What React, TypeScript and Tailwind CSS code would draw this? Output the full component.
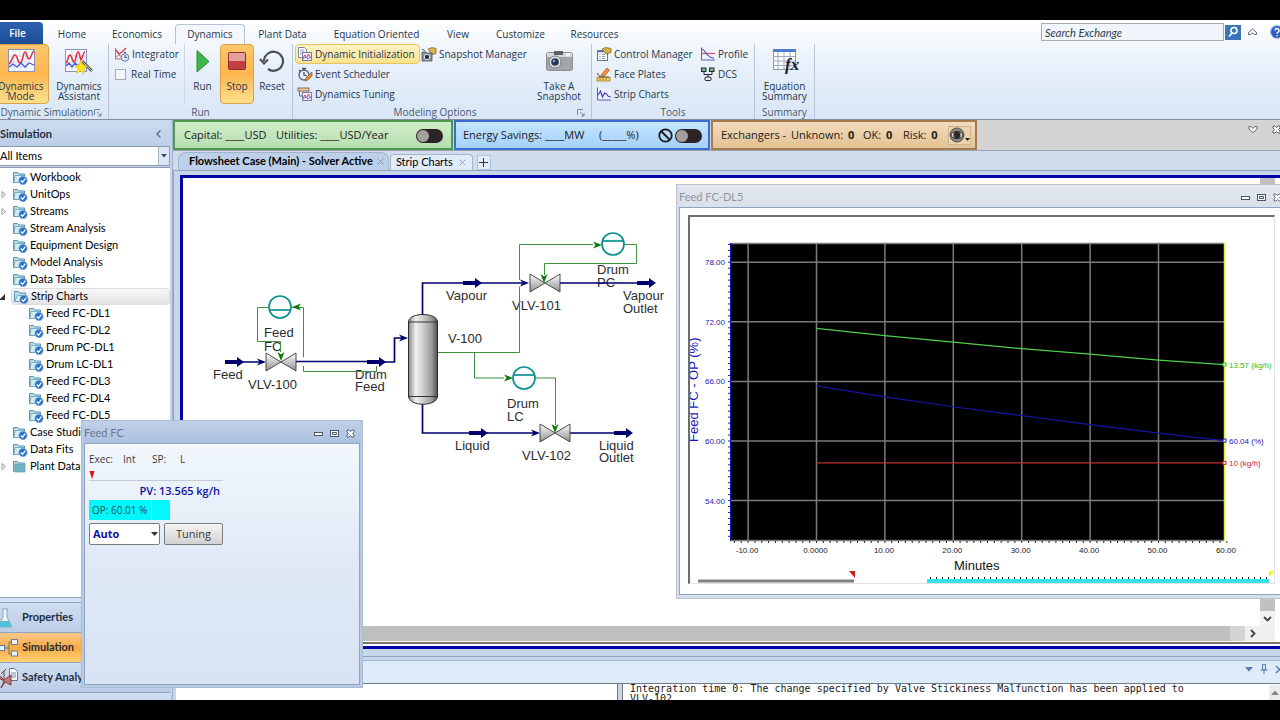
import React from "react";
import clsx from "clsx";

interface TreeItem {
    name: string
    expander?: "closed" | "open"
    child?: boolean
    selected?: boolean
    plain?: boolean
}

const ribbonTabs = [
    { name: "Home", width: "w-[54px]" },
    { name: "Economics", width: "w-[76px]" },
    { name: "Dynamics", width: "w-[70px]" },
    { name: "Plant Data", width: "w-[75px]" },
    { name: "Equation Oriented", width: "w-[113px]" },
    { name: "View", width: "w-[50px]" },
    { name: "Customize", width: "w-[75px]" },
    { name: "Resources", width: "w-[73px]" },
];

const treeItems: TreeItem[] = [
    { name: "Workbook" },
    { name: "UnitOps", expander: "closed" },
    { name: "Streams", expander: "closed" },
    { name: "Stream Analysis" },
    { name: "Equipment Design" },
    { name: "Model Analysis" },
    { name: "Data Tables" },
    { name: "Strip Charts", expander: "open", selected: true },
    { name: "Feed FC-DL1", child: true },
    { name: "Feed FC-DL2", child: true },
    { name: "Drum PC-DL1", child: true },
    { name: "Drum LC-DL1", child: true },
    { name: "Feed FC-DL3", child: true },
    { name: "Feed FC-DL4", child: true },
    { name: "Feed FC-DL5", child: true },
    { name: "Case Studies" },
    { name: "Data Fits" },
    { name: "Plant Data", expander: "closed", plain: true },
];

/* ---------- icons ---------- */

const WaveIcon = ({ wand }: { wand?: boolean }) => (
    <svg width="30" height="26" viewBox="0 0 30 26" fill="none">
        <rect x={wand ? 1.5 : 2.5} y="1.5" width={wand ? 21 : 26} height="22" fill="#f6f8ff" stroke="#8b93b8" />
        <path d="M8 2v21M14 2v21M20 2v21M3 8h19M3 14h19M3 19h19" stroke="#d5dcf0" />
        <path d={wand ? "M2 15c2-1 2-8 4-8s2 7 4 7 2-10 4-10 2 8 3 8 2-8 4-8" : "M3 16c3-1 3-9 6-9s2 8 5 8 3-11 5-11 2 7 4 7 3-8 5-8"} stroke="#e0343f" strokeWidth="1.6" />
        <path d={wand ? "M2 18l3-3 3 4 3-4 3 3 4-3" : "M3 19l4-3 4 3 4-4 4 4 4-4 5 2"} stroke="#4a50d8" strokeWidth="1.3" />
        {wand && (
            <>
                <path d="M18 13l10 10" stroke="#555" strokeWidth="2.6" />
                <path d="M18 13l10 10" stroke="#ddd" strokeWidth="0.8" />
                <path d="M17 13l-2 4-4 1 3 3-2 4 5-2 3 3v-5l3-3-4-1z" fill="#ffe51f" stroke="#e0b400" strokeWidth="0.6" />
            </>
        )}
    </svg>
);

const FolderIcon = ({ plain, open }: { plain?: boolean, open?: boolean }) => (
    <svg width="16" height="14" viewBox="0 0 16 14" className="shrink-0">
        <path d="M1.5 11.5v-10h4l1.5 1.5h5.5v8.5z" fill="#b8dce8" stroke="#5a93ad" />
        <path d={open ? "M1.5 11.5l3-6h9l-2 6z" : plain ? "M3 4h10v8H3z" : "M3 4.500h9v7H2z"} fill={plain ? "#6fb0c4" : "#d2ecf3"} stroke="#6aa3ba" strokeWidth="0.8" />
        {!plain && (
            <>
                <circle cx="11" cy="9.500" r="4.2" fill="#2f73c4" stroke="#8eb7e6" strokeWidth="0.6" />
                <path d="M8.800 9.500l1.700 1.800 2.800-3.600" stroke="#fff" strokeWidth="1.3" fill="none" />
            </>
        )}
    </svg>
);

const IntegratorIcon = () => (
    <svg width="16" height="15" viewBox="0 0 16 15" fill="none">
        <rect x="1.500" y="1.500" width="11" height="10" fill="#f3eef5" />
        <path d="M1.500 1v11H13" stroke="#9a7f90" />
        <path d="M2 3l3 4 3-2 4-4" stroke="#cf3e48" strokeWidth="1.300" />
        <path d="M2 10l3-2 3 2" stroke="#c76f78" />
        <circle cx="11" cy="10.500" r="3.800" fill="#dce8f5" stroke="#6d7c94" />
        <path d="M11 8v2.500h2M10 5.500h2" stroke="#2c5aa0" />
    </svg>
);

const PagesIcon = () => (
    <svg width="16" height="14" viewBox="0 0 16 14" fill="none">
        <path d="M1.500 10.500V.5h6l2 2v8z" fill="#fff" stroke="#7c88a0" />
        <path d="M3 3h4M3 5h4M3 7h2" stroke="#9aa6ba" />
        <rect x="5.500" y="5.500" width="9" height="8" fill="#f5efff" stroke="#7f7aa6" />
        <path d="M6 11l2-3 1.500 3 2-4 2 4" stroke="#d8405a" />
        <path d="M6 12l3-2 2 2 3-2" stroke="#4a50d8" strokeWidth="0.8" />
    </svg>
);

const ScheduleIcon = () => (
    <svg width="16" height="15" viewBox="0 0 16 15" fill="none">
        <circle cx="7" cy="8" r="5" fill="#e8f0fa" stroke="#586b88" strokeWidth="1.400" />
        <path d="M5 1.500h4M7 2v2M7 5v3l3 1M2 3l1.500 1.500" stroke="#405472" strokeWidth="1.300" />
        <path d="M15 5l-6 6-1 3 3-1 4-4z" fill="#e58a2c" stroke="#9b5a1f" strokeWidth="0.7" />
    </svg>
);

const TuningIcon = () => (
    <svg width="16" height="14" viewBox="0 0 16 14" fill="none">
        <rect x="1" y="1" width="11" height="3" fill="#f6c887" stroke="#7e6f66" />
        <path d="M2.500 4v5h4" stroke="#5f6f8c" />
        <rect x="5.500" y="5.500" width="9" height="8" fill="#f5efff" stroke="#7f7aa6" />
        <path d="M6 11l2-3 1.500 3 2-4 2 4" stroke="#d8405a" />
        <path d="M6 12l3-2 2 2 3-2" stroke="#4a50d8" strokeWidth="0.8" />
    </svg>
);

const SnapshotManagerIcon = () => (
    <svg width="16" height="15" viewBox="0 0 16 15" fill="none">
        <path d="M7 2l4-1.500 4 1v5l-4 1z" fill="#d9b24c" stroke="#8a6a1e" strokeWidth="0.8" />
        <path d="M1 5h4l1 1h5v8H1z" fill="#8d9299" stroke="#4e545c" strokeWidth="0.8" />
        <path d="M1 2l3 2" stroke="#4e545c" />
        <circle cx="6" cy="10" r="2.700" fill="#22303f" stroke="#dfe6ee" />
    </svg>
);

const ControlManagerIcon = () => (
    <svg width="16" height="15" viewBox="0 0 16 15" fill="none">
        <rect x="1.500" y="3.500" width="10" height="10" fill="#fbfcfe" stroke="#6a7384" />
        <path d="M2 4.500h9" stroke="#5877b4" strokeWidth="1.600" />
        <path d="M3.500 7.500h1M3.500 9.500h1M3.500 11.500h1M6 7.500h3M6 9.500h3M6 11.500h3" stroke="#8a93a3" />
        <path d="M6 2l4-1.500 5 1v4l-5 1.500z" fill="#d9b24c" stroke="#8a6a1e" strokeWidth="0.8" />
    </svg>
);

const FacePlatesIcon = () => (
    <svg width="16" height="15" viewBox="0 0 16 15" fill="none">
        <path d="M5 8l6-7 2.500 2L8 9.500 5 10z" fill="#f1902f" stroke="#a35217" strokeWidth="0.7" />
        <path d="M1 6l3 4h9" stroke="#3a3f48" />
        <rect x="1" y="10.500" width="13" height="3.500" fill="#f5cc6c" stroke="#a67a23" strokeWidth="0.8" />
        <path d="M4 11v2M7 11v2M10 11v2" stroke="#8a6a1e" strokeWidth="0.8" />
    </svg>
);

const StripIcon = () => (
    <svg width="16" height="14" viewBox="0 0 16 14" fill="none">
        <rect x="1" y="1" width="14" height="12" fill="#f0f1ff" />
        <path d="M1.500.5v12.500H15" stroke="#5c5fa8" />
        <path d="M2 8l2.500-4 2 6 2-4 2 1 1.500 2 2.500 1" stroke="#3a36c8" strokeWidth="1.100" />
    </svg>
);

const ProfileIcon = () => (
    <svg width="16" height="14" viewBox="0 0 16 14" fill="none">
        <rect x="1" y="0" width="14" height="12" fill="#f0f1ff" />
        <path d="M1.500.5v12.500H15" stroke="#5c5fa8" />
        <path d="M2 6.500h13" stroke="#e2475a" strokeWidth="1.200" />
        <path d="M2 2c4 1 4 9 12 9" stroke="#3a4fc8" strokeWidth="1.200" />
    </svg>
);

const DcsIcon = () => (
    <svg width="16" height="15" viewBox="0 0 16 15" fill="none">
        <rect x="1.500" y="1" width="4.500" height="3.500" fill="#7fb98a" stroke="#23272e" />
        <rect x="9.500" y="1" width="4.500" height="3.500" fill="#7fb98a" stroke="#23272e" />
        <path d="M4 5v2.500h8V5M8 7.500V10" stroke="#23272e" />
        <rect x="5" y="10" width="6" height="3.500" rx="1" fill="#e3e6ea" stroke="#23272e" />
    </svg>
);

const RunIcon = () => (
    <svg width="26" height="26" viewBox="0 0 26 26">
        <path d="M7 2.500l12 11-12 10.500z" fill="#3fb64a" stroke="#2b8f38" />
    </svg>
);

const StopIcon = () => (
    <svg width="26" height="26" viewBox="0 0 26 26">
        <rect x="4.500" y="4.500" width="17" height="17" rx="1" fill="#c23f45" stroke="#8f2a2f" />
        <path d="M5 5h16v8H5z" fill="#e5a09c" />
    </svg>
);

const ResetIcon = () => (
    <svg width="26" height="26" viewBox="0 0 26 26" fill="none">
        <path d="M5 13a9.500 9.500 0 1 1 4 8" stroke="#4b4e54" strokeWidth="2.200" />
        <path d="M1 11l4 4.500 4-4" stroke="#4b4e54" strokeWidth="2" />
    </svg>
);

const CameraIcon = () => (
    <svg width="30" height="26" viewBox="0 0 30 26">
        <rect x="2.500" y="4.500" width="26" height="18" rx="2" fill="#a3a5a8" stroke="#8b8d91" />
        <path d="M3 5h25v4H3z" fill="#d6d8da" />
        <rect x="10" y="3" width="9" height="4" fill="#5d6167" />
        <rect x="22" y="5" width="4" height="3" fill="#f4f5f6" />
        <circle cx="11" cy="14" r="6" fill="#dfe2e5" stroke="#7b7f85" />
        <circle cx="11" cy="14" r="3.800" fill="#24374e" />
        <circle cx="10" cy="13" r="1.300" fill="#7fa8d8" />
    </svg>
);

const EquationIcon = () => (
    <svg width="30" height="28" viewBox="0 0 30 28">
        <rect x="3.500" y="3.500" width="22" height="19" fill="#fff" stroke="#8494b2" />
        <path d="M3 2h23v3H3z" fill="#4d7dcb" />
        <path d="M8 5v17M14 5v17M20 5v17M3 9.500h22M3 14h22M3 18.500h22" stroke="#9aa9c6" />
        <text x="15" y="23" fontSize="17" fontStyle="italic" fontWeight="bold" className="font-[Liberation_Serif,serif]" fill="#1c1c1c">fx</text>
    </svg>
);

const FlaskIcon = () => (
    <svg width="18" height="22" viewBox="0 0 18 22">
        <path d="M6 2h6M7 2v8L2 20h14l-5-10V2" fill="#eef6fb" stroke="#8fa3b8" />
        <path d="M5 14h8l3 6H2z" fill="#54bfd8" />
    </svg>
);

const FlowIcon = () => (
    <svg width="22" height="20" viewBox="0 0 22 20">
        <path d="M8 10h5M13 4v12M13 4h3M13 16h3" stroke="#6b7688" fill="none" />
        <g fill="#e9f3ff" stroke="#5f7fa8">
            <rect x="2.500" y="7.500" width="6" height="5" />
            <rect x="15.500" y="1.500" width="6" height="5" />
            <rect x="15.500" y="13" width="6" height="5" />
        </g>
    </svg>
);

const SafetyIcon = () => (
    <svg width="22" height="22" viewBox="0 0 22 22">
        <path d="M13.500 1.500h5l3 3v9h-8z" fill="#f6fafe" stroke="#5f7690" />
        <path d="M15 6h5M15 8h5M15 10h5" stroke="#7f93aa" />
        <path d="M4 9l4 4 7-5v10l-6-3-4 6 3-7-5-3zM8 12V4m-3 3l5-5" fill="#c27777" stroke="#7a3d3d" />
    </svg>
);

const LauncherIcon = ({ className }: { className?: string }) => (
    <svg width="8" height="8" viewBox="0 0 8 8" fill="none" stroke="#7d8796" className={className}>
        <path d="M.5 6V.5H6M3 3l4 4M7 4v3H4" />
    </svg>
);

const CloseIcon = () => (
    <svg width="9" height="9" viewBox="0 0 9 9">
        <path d="M1 1h2l1.500 1.700L6 1h2v2L6.500 4.500 8 6v2H6L4.500 6.500 3 8H1V6l1.500-1.500L1 3z" fill="#fff" stroke="#4a5568" strokeWidth="0.900" />
    </svg>
);

const WindowButtons = () => (
    <div className="flex items-center gap-[7px]">
        <button aria-label="Minimize"><svg width="9" height="9" viewBox="0 0 9 9"><rect x="0.500" y="3.500" width="8" height="3" fill="#fff" stroke="#4a5568" /></svg></button>
        <button aria-label="Restore"><svg width="9" height="9" viewBox="0 0 9 9"><rect x="0.500" y="1.500" width="8" height="6" fill="#fff" stroke="#4a5568" /><path d="M2.500 3.500h4v2h-4z" fill="#fff" stroke="#4a5568" /></svg></button>
        <button aria-label="Close"><CloseIcon /></button>
    </div>
);

const Caret = ({ className }: { className?: string }) => (
    <svg width="8" height="5" viewBox="0 0 8 5" className={className}><path d="M0 0h8L4 4.500z" fill="currentColor" /></svg>
);

/* ---------- ribbon ---------- */

interface RibbonGroupProps {
    label: string
    width: string
    launcher?: boolean
    children: React.ReactNode
}

const RibbonGroup: React.FC<RibbonGroupProps> = ({ label, width, launcher, children }) => (
    <section className={clsx("flex shrink-0 flex-col border-r border-[#b9c6d8]", width)}>
        <div className="flex h-[60px]">{children}</div>
        <div className="flex h-[17px] items-center justify-center leading-[17px] whitespace-nowrap text-[#465a77]">
            <span className={clsx(launcher && "flex-1 text-center")}>{label}</span>
            {launcher && <button aria-label={label + " settings"} className="mr-[6px]"><LauncherIcon /></button>}
        </div>
    </section>
);

interface LargeButtonProps {
    icon: React.ReactNode
    lines: string[]
    active?: boolean
    width: string
}

const LargeButton: React.FC<LargeButtonProps> = ({ icon, lines, active, width }) => (
    <button className={clsx("flex h-[60px] shrink-0 flex-col items-center rounded-sm border pt-[3px] leading-[10px]", width,
        active ? "border-[#d9a24a] bg-linear-to-b from-[#fbc66c] via-[#fdb64c] to-[#fde08c]" : "border-transparent")}>
        <span className="flex h-[26px] items-center">{icon}</span>
        <span className="mt-[7px]">{lines.map((line) => <span key={line} className="block whitespace-nowrap">{line}</span>)}</span>
    </button>
);

const SmallButton = ({ icon, label, active }: { icon: React.ReactNode, label: string, active?: boolean }) => (
    <button className={clsx("flex h-5 items-center gap-[2px] whitespace-nowrap border pl-[1px] pr-1",
        active ? "rounded-sm border-[#e5c365] bg-linear-to-b from-[#fff3c4] to-[#fde28c]" : "border-transparent")}>
        {icon}{label}
    </button>
);

const Ribbon = () => (
    <header className="shrink-0 overflow-hidden border-b border-[#858c98] bg-linear-to-b from-white via-[#e6effa] to-[#d9e6f5] text-[10px] text-[#25364f]">
        <div className="flex h-6 items-end">
            <button className="mr-[2px] h-[22px] w-[43px] shrink-0 rounded-tr-sm bg-linear-to-b from-[#2d62b0] to-[#1d4c96] pr-2 font-semibold text-white">File</button>
            <nav className="flex shrink-0">
                {ribbonTabs.map((tab) => (
                    <a key={tab.name} href="#" className={clsx("flex h-5 items-center justify-center whitespace-nowrap", tab.width,
                        tab.name === "Dynamics" && "rounded-t-sm border border-b-0 border-[#b5c3d6] bg-[#f4f8fd]")}>{tab.name}</a>
                ))}
            </nav>
            <div className="-mr-[4px] ml-auto flex shrink-0 items-center self-start pt-[3px]">
                <input aria-label="Search Exchange" placeholder="Search Exchange" className="h-[18px] w-[183px] border border-[#a3adba] bg-[#f1f6fc] px-[3px] font-[Lato,sans-serif] text-[11px] italic placeholder:text-[#2f3d52]" />
                <button aria-label="Search" className="ml-[1px] flex h-[15px] w-[16px] items-center justify-center bg-[#3b74b8]">
                    <svg width="12" height="12" viewBox="0 0 12 12" fill="none" stroke="#fff" strokeWidth="1.600"><circle cx="7" cy="4.500" r="3" /><path d="M5 7L2 10.500" /></svg>
                </button>
                <button aria-label="Collapse ribbon" className="ml-[7px]">
                    <svg width="9" height="8" viewBox="0 0 9 8"><path d="M.5 4.500l4-3.500 4 3.500v2h-2l-2-1.500-2 1.500h-2z" fill="#fff" stroke="#4a5568" strokeWidth="0.900" /></svg>
                </button>
                <button aria-label="Help" className="ml-[13px]">
                    <svg width="14" height="14" viewBox="0 0 14 14"><circle cx="7" cy="7" r="6.300" fill="#2c5fc0" stroke="#88a8dc" /><path d="M5 5.500a2 2 0 1 1 3 1.700q-1 .6-1 1.500M7 10v1.300" stroke="#fff" strokeWidth="1.400" fill="none" /></svg>
                </button>
            </div>
        </div>
        <div className="flex h-[75px]">
            <RibbonGroup label="Dynamic Simulation" width="w-[109px]" launcher>
                <div className="-ml-[7px] flex gap-[2px]">
                    <LargeButton icon={<WaveIcon />} lines={["Dynamics", "Mode"]} active width="w-[56px]" />
                    <LargeButton icon={<WaveIcon wand />} lines={["Dynamics", "Assistant"]} width="w-[56px]" />
                </div>
            </RibbonGroup>
            <RibbonGroup label="Run" width="w-[184px]">
                <div className="w-[76px] border-r border-[#cdd8e6] pl-[3px]">
                    <SmallButton icon={<IntegratorIcon />} label="Integrator" />
                    <label className="flex h-5 items-center gap-[5px] pl-[3px] whitespace-nowrap">
                        <input type="checkbox" className="size-[11px] appearance-none border border-[#a7aeb8] bg-[#f3f5f7]" />
                        Real Time
                    </label>
                </div>
                <LargeButton icon={<RunIcon />} lines={["Run"]} width="w-[35px]" />
                <LargeButton icon={<StopIcon />} lines={["Stop"]} active width="w-[34px]" />
                <LargeButton icon={<ResetIcon />} lines={["Reset"]} width="w-[36px]" />
            </RibbonGroup>
            <RibbonGroup label="Modeling Options" width="w-[299px]" launcher>
                <div className="w-[126px] pl-[2px]">
                    <SmallButton icon={<PagesIcon />} label="Dynamic Initialization" active />
                    <SmallButton icon={<ScheduleIcon />} label="Event Scheduler" />
                    <SmallButton icon={<TuningIcon />} label="Dynamics Tuning" />
                </div>
                <div className="w-[113px]">
                    <SmallButton icon={<SnapshotManagerIcon />} label="Snapshot Manager" />
                </div>
                <LargeButton icon={<CameraIcon />} lines={["Take A", "Snapshot"]} width="w-[54px]" />
            </RibbonGroup>
            <RibbonGroup label="Tools" width="w-[163px]">
                <div className="w-[106px] pl-[2px]">
                    <SmallButton icon={<ControlManagerIcon />} label="Control Manager" />
                    <SmallButton icon={<FacePlatesIcon />} label="Face Plates" />
                    <SmallButton icon={<StripIcon />} label="Strip Charts" />
                </div>
                <div>
                    <SmallButton icon={<ProfileIcon />} label="Profile" />
                    <SmallButton icon={<DcsIcon />} label="DCS" />
                </div>
            </RibbonGroup>
            <RibbonGroup label="Summary" width="w-[60px]">
                <LargeButton icon={<EquationIcon />} lines={["Equation", "Summary"]} width="w-[59px]" />
            </RibbonGroup>
        </div>
    </header>
);

/* ---------- navigation pane ---------- */

const NavButton = ({ icon, label, active }: { icon: React.ReactNode, label: string, active?: boolean }) => (
    <button className={clsx("flex h-[30px] w-full shrink-0 items-center border-t border-[#8fa3bf] whitespace-nowrap font-bold text-[#1f2d44]",
        active ? "bg-linear-to-b from-[#fbc98c] via-[#f9ab42] to-[#fdd271]" : "bg-linear-to-b from-[#cfddf0] to-[#bccde6]")}>
        <span className="-ml-1 w-[26px]">{icon}</span>{label}
    </button>
);

const Sidebar = () => (
    <aside className="flex w-[173px] shrink-0 flex-col overflow-hidden border-r border-[#9fb0c8] bg-[#c3d3ea] pr-[2px] font-[Lato,sans-serif] text-[11px]">
        <div className="flex h-[26px] items-center justify-between bg-linear-to-b from-[#cddbee] to-[#bccee7] pt-[2px] pr-2 font-bold text-[#1f2d44]">
            <h2>Simulation</h2>
            <button aria-label="Collapse pane">
                <svg width="6" height="8" viewBox="0 0 6 8" fill="none" stroke="#5c6b82" strokeWidth="1.300"><path d="M4.500 .5L1 4l3.500 3.500" /></svg>
            </button>
        </div>
        <div className="relative h-5">
            <select aria-label="Items filter" className="block h-5 w-full appearance-none border border-[#8e9cb3] border-l-0 bg-white leading-[18px]">
                <option>All Items</option>
            </select>
            <span className="pointer-events-none absolute inset-y-[1px] right-[1px] flex w-[11px] items-center justify-center border-l border-[#a9b9d0] bg-[#dce7f5] text-[#3a4a66]">
                <svg width="6" height="4" viewBox="0 0 6 4"><path d="M0 0h6L3 3.500z" fill="currentColor" /></svg>
            </span>
        </div>
        <ul className="mt-[1px] flex-1 border-t border-[#8e9cb3] bg-white pt-[1px]">
            {treeItems.map((item) => (
                <li key={item.name + (item.plain ? "-plain" : "")} className="flex h-[17px] items-center whitespace-nowrap">
                    <span className="w-[11px] shrink-0">
                        {item.expander === "closed" && <svg width="7" height="9" viewBox="0 0 7 9"><path d="M2 1.500v6l3.500-3z" fill="#fff" stroke="#9a9a9a" /></svg>}
                        {item.expander === "open" && <svg width="7" height="8" viewBox="0 0 7 8"><path d="M5 1v6H-1z" fill="#333" /></svg>}
                    </span>
                    <span className={clsx("flex h-[17px] flex-1 items-center gap-[2px]", item.child ? "pl-[17px]" : "pl-[1px]",
                        item.selected && "rounded-sm border border-[#dcdcdc] bg-linear-to-b from-[#f8f8f8] to-[#e3e3e3] pl-0")}>
                        <FolderIcon plain={item.plain} open={item.selected} />{item.name}
                    </span>
                </li>
            ))}
        </ul>
        <div className="h-[5px] shrink-0 border-t border-[#8fa3bf] bg-[#d5e2f3]" />
        <nav className="flex h-[98px] shrink-0 flex-col overflow-hidden">
            <NavButton icon={<FlaskIcon />} label="Properties" />
            <NavButton icon={<FlowIcon />} label="Simulation" active />
            <NavButton icon={<SafetyIcon />} label="Safety Analysis" />
            <NavButton icon={<svg width="22" height="22" viewBox="0 0 22 22"><path d="M5 10l4-3 1 8zM12 8h7v8h-7z" fill="#7fa3b8" /></svg>} label="" />
        </nav>
    </aside>
);

/* ---------- activated analysis bar ---------- */

const Toggle = ({ label }: { label: string }) => (
    <button role="switch" aria-checked="false" aria-label={label} className="flex h-[14px] w-[27px] items-center rounded-full bg-[#2b2326] pl-[1px]">
        <span className="size-3 rounded-full bg-[#a5a0a0]" />
    </button>
);

const AnalysisBar = () => (
    <div className="flex h-[31px] shrink-0 gap-[1px] overflow-hidden border-b border-[#9aa3ae] bg-[#d3d3d3] text-[11px] whitespace-nowrap text-[#1b1b1b]">
        <div className="flex w-[280px] shrink-0 items-center border-2 border-[#4f9a4a] bg-linear-to-b from-[#d2edc9] to-[#b4deb0] pt-[1px] pl-[9px]">
            <span className="w-[92px]">Capital: ____USD</span>
            <span>Utilities: ____USD/Year</span>
            <span className="mr-2 ml-auto"><Toggle label="Economics" /></span>
        </div>
        <div className="flex w-[256px] shrink-0 items-center border-2 border-[#3c6cd0] bg-linear-to-b from-[#c5e4ff] to-[#a4d1fb] pt-[1px] pl-[7px]">
            <span className="w-[136px]">Energy Savings: ____MW</span>
            <span>(_____%)</span>
            <span className="mr-[6px] ml-auto flex items-center gap-[2px]">
                <svg width="15" height="15" viewBox="0 0 15 15" fill="none" stroke="#1b1b1b" strokeWidth="1.800"><circle cx="7.500" cy="7.500" r="6.200" /><path d="M3 3l9 9" /></svg>
                <Toggle label="Energy" />
            </span>
        </div>
        <div className="flex w-[266px] shrink-0 items-center border-2 border-[#a07c50] bg-linear-to-b from-[#f3dcbb] to-[#e2c193] pt-[1px] pl-2">
            <span className="w-[70px]">Exchangers -</span>
            <span className="w-[72px]">Unknown: <b className="ml-[2px]">0</b></span>
            <span className="w-[40px]">OK: <b className="ml-[2px]">0</b></span>
            <span>Risk: <b className="ml-[2px]">0</b></span>
            <button aria-label="Exchanger options" className="mr-1 ml-auto flex h-[19px] w-[23px] items-center border border-[#cdb48d] bg-[#ead3ae]">
                <svg width="21" height="17" viewBox="0 0 21 17"><circle cx="8" cy="8" r="7" fill="#8d8a84" stroke="#55524d" /><ellipse cx="8" cy="8" rx="6" ry="3.500" fill="#d8d5cf" stroke="#2d2b28" /><circle cx="8" cy="8" r="3.500" fill="#2d2b28" /><path d="M16 11h5l-2.500 3z" fill="#222" /></svg>
            </button>
        </div>
        <div className="-mr-[1px] ml-auto flex shrink-0 gap-[14px] pt-[5px]">
            <button aria-label="Collapse" className="self-start">
                <svg width="10" height="9" viewBox="0 0 10 9"><path d="M1 3V1.500h2l2 2 2-2h2V4L5 7.500 1 4z" fill="#fff" stroke="#4a5568" strokeWidth="0.900" /></svg>
            </button>
            <button aria-label="Close analysis bar" className="self-start">
                <CloseIcon />
            </button>
        </div>
    </div>
);

/* ---------- flowsheet ---------- */

const Valve = ({ x, y }: { x: number, y: number }) => (
    <g fill="url(#metal-v)" stroke="#3a3a3a" strokeWidth="0.900">
        <path d={`M${x - 15} ${y - 9}V${y + 9}L${x} ${y}z`} />
        <path d={`M${x + 15} ${y - 9}V${y + 9}L${x} ${y}z`} />
    </g>
);

const Stream = ({ x, y }: { x: number, y: number }) => (
    <path d={`M${x - 9} ${y - 2}h12v-3l7 5-7 5v-3h-12z`} fill="#00006e" />
);

const Arrow = ({ x, y, dir = 0, color = "#00006e" }: { x: number, y: number, dir?: number, color?: string }) => (
    <path d="M0 0l-9-3.500 2.500 3.500-2.500 3.500z" fill={color} transform={`translate(${x} ${y}) rotate(${dir})`} />
);

const Controller = ({ x, y, line }: { x: number, y: number, line: number }) => (
    <g fill="#fff" stroke="#0d9090" strokeWidth="1.700">
        <circle cx={x} cy={y} r="11" />
        <path d={`M${x - 11} ${line}h22`} />
    </g>
);

const diagramLabels = [
    { x: 264, y: 337, text: "Feed" },
    { x: 264, y: 351, text: "FC" },
    { x: 213, y: 379, text: "Feed" },
    { x: 248, y: 389, text: "VLV-100" },
    { x: 355, y: 379, text: "Drum" },
    { x: 355, y: 391, text: "Feed" },
    { x: 446, y: 300, text: "Vapour" },
    { x: 512, y: 310, text: "VLV-101" },
    { x: 597, y: 274, text: "Drum" },
    { x: 597, y: 287, text: "PC" },
    { x: 623, y: 300, text: "Vapour" },
    { x: 623, y: 313, text: "Outlet" },
    { x: 448, y: 343, text: "V-100" },
    { x: 507, y: 408, text: "Drum" },
    { x: 507, y: 421, text: "LC" },
    { x: 455, y: 450, text: "Liquid" },
    { x: 522, y: 460, text: "VLV-102" },
    { x: 599, y: 450, text: "Liquid" },
    { x: 599, y: 462, text: "Outlet" },
];

const FlowsheetDiagram = () => (
    <svg width="494" height="420" viewBox="183 178 494 420" fill="none" className="block">
        <defs>
            <linearGradient id="metal-v" x1="0" y1="0" x2="0" y2="1">
                <stop offset="0" stopColor="#fff" />
                <stop offset="1" stopColor="#8f8f8f" />
            </linearGradient>
            <linearGradient id="metal-h" x1="0" y1="0" x2="1" y2="0">
                <stop offset="0" stopColor="#8a8a8a" />
                <stop offset="0.25" stopColor="#efefef" />
                <stop offset="0.45" stopColor="#d6d6d6" />
                <stop offset="0.8" stopColor="#9a9a9a" />
                <stop offset="1" stopColor="#4e4e4e" />
            </linearGradient>
        </defs>
        <g className="font-[Liberation_Sans,sans-serif]" fontSize="13" fill="#2c2c2c">
            {diagramLabels.map((label) => <text key={`${label.x}-${label.y}`} x={label.x} y={label.y}>{label.text}</text>)}
        </g>
        <g stroke="#3f8f3f" strokeWidth="1">
            <path d="M268 307.500h-10.500v34h23V352" />
            <path d="M292 307.500h11.500v50M303.500 366v5.500h73V366" />
            <path d="M438 352.500h81.500v-66M519.500 280v-35.500H593" />
            <path d="M624 244.500h12.500v19h-92V275" />
            <path d="M474.500 352.500v25.500H504M535 378h20.500v47" />
        </g>
        <g stroke="#00006e" strokeWidth="1.700">
            <path d="M240 362h24M295 361.500h73M384 362h10.500v-24H404" />
            <path d="M422.500 316v-33H522M560 283h88" />
            <path d="M422.500 404v29H534M570 433h55" />
        </g>
        <Stream x={234} y={362} />
        <Stream x={376} y={362} />
        <Stream x={472} y={283} />
        <Stream x={646} y={283} />
        <Stream x={478} y={433} />
        <Stream x={623} y={433} />
        <Arrow x={266} y={362} />
        <Arrow x={408} y={338} />
        <Arrow x={529} y={283} />
        <Arrow x={540} y={433} />
        <path d="M408.500 322c0-10 29-10 29 0v74c0 11-29 11-29 0z" fill="url(#metal-h)" stroke="#2a2a2a" />
        <path d="M408 322h30M408 396.500h30" stroke="#333" />
        <Valve x={281} y={362} />
        <Valve x={545} y={283} />
        <Valve x={555} y={433} />
        <Arrow x={281} y={361} dir={90} color="#0a7a0a" />
        <Arrow x={544} y={283} dir={90} color="#0a7a0a" />
        <Arrow x={555} y={433} dir={90} color="#0a7a0a" />
        <Arrow x={292} y={307} dir={180} color="#0a7a0a" />
        <Arrow x={602} y={245} color="#0a7a0a" />
        <Arrow x={513} y={378} color="#0a7a0a" />
        <Controller x={280} y={307} line={310} />
        <Controller x={613} y={244} line={241} />
        <Controller x={524} y={378} line={375} />
    </svg>
);

/* ---------- strip chart window ---------- */

const xTicks = [-10, 0, 10, 20, 30, 40, 50, 60];
const yTicks = [78, 72, 66, 60, 54];
const toX = (minutes: number) => 816.5 + minutes * 6.84;
const toY = (value: number) => 441 - (value - 60) * 9.93;

const series = [
    { color: "#4fce4f", label: "13.57 (kg/h)", labelColor: "#22c322", values: [71.35, 70.62, 69.95, 69.3, 68.75, 68.15, 67.7] },
    { color: "#1414a0", label: "60.04 (%)", labelColor: "#1a1ab8", values: [65.55, 64.45, 63.45, 62.55, 61.65, 60.8, 60.04] },
    { color: "#c03030", label: "10 (kg/h)", labelColor: "#c81e1e", values: [57.8, 57.8, 57.8, 57.8, 57.8, 57.8, 57.8] },
];

const minorX = Array.from({ length: 73 }, (_, i) => -12 + i);
const minorY = Array.from({ length: 50 }, (_, i) => 50.4 + i * 0.6);
const dots = Array.from({ length: 57 }, (_, i) => 930 + i * 6);

const StripChart = () => (
    <svg width="590" height="366" viewBox="690 217 590 366" className="block font-[Liberation_Sans,sans-serif]" fontSize="8">
        <rect x="730" y="243" width="494" height="298" />
        <g stroke="#7b7b7b" strokeWidth="1.500">
            {xTicks.slice(0, -1).map((t) => <path key={t} d={`M${toX(t)} 243V541`} />)}
            {yTicks.map((t) => <path key={t} d={`M730 ${toY(t)}H1224`} />)}
            <path d="M730 243.500H1224M730 540.500H1224" />
        </g>
        {minorX.map((t) => <path key={t} d={`M${toX(t)} 541v2`} stroke="#222" />)}
        {minorY.map((t) => <path key={t} d={`M728 ${toY(t)}h2`} stroke="#2222b0" />)}
        <path d="M730.500 243V541" stroke="#1010b0" />
        <path d="M1224.500 243V541" stroke="#e8e84a" strokeWidth="1.500" />
        {xTicks.map((t) => (
            <text key={t} x={toX(t) - 1} y="553" textAnchor="middle" fill="#222">{t === 0 ? "0.0000" : t.toFixed(2)}</text>
        ))}
        {yTicks.map((t) => (
            <text key={t} x="725" y={toY(t) + 3} textAnchor="end" fill="#1a1ab0">{t.toFixed(2)}</text>
        ))}
        {series.map((s) => (
            <g key={s.label}>
                <polyline fill="none" stroke={s.color} strokeWidth="1.200" points={s.values.map((v, i) => `${i < 6 ? toX(i * 10) : 1224},${toY(v)}`).join(" ")} />
                <rect x="1223" y={toY(s.values[6]) - 1.5} width="3" height="3" fill="#fff" stroke={s.labelColor} />
                <text x="1229" y={toY(s.values[6]) + 3} fill={s.labelColor}>{s.label}</text>
            </g>
        ))}
        <text transform="translate(698 442) rotate(-90)" fontSize="13" fill="#1a1ab8">Feed FC - OP (%)</text>
        <text x="954" y="570" fontSize="13" fill="#111">Minutes</text>
        <path d="M698 581H854" stroke="#808080" strokeWidth="3" />
        <path d="M849 571h6v7z" fill="#c81e1e" />
        <path d="M927 581H1269" stroke="#35e0e6" strokeWidth="4" />
        {dots.map((x) => <path key={x} d={`M${x}.500 577v2`} stroke="#222" />)}
        <path d="M1269 571h6l-6 6z" fill="#f7f71a" />
    </svg>
);

const StripChartWindow = () => (
    <section className="absolute top-[9px] -right-[5px] left-[503px] overflow-hidden border border-[#b9c4d2] bg-[#d6dee9] px-[2px] pb-[3px]">
        <div className="flex h-[22px] items-center justify-between bg-linear-to-b from-[#e4e8f0] to-[#d8e0eb] pt-[2px] font-[Lato,sans-serif] text-[11px] text-[#8e959f]">
            <h2>Feed FC-DL5</h2>
            <WindowButtons />
        </div>
        <div className="h-[388px] border border-[#8ea3bd] bg-white pt-[7px] pl-[8px]">
            <div className="h-[369px] w-[587px] overflow-hidden border-t-2 border-l-2 border-r border-b border-[#6d6d6d] border-r-[#e2e2e2] border-b-[#e2e2e2]">
                <StripChart />
            </div>
        </div>
    </section>
);

/* ---------- controller face plate ---------- */

const FacePlate = () => (
    <section className="absolute top-[400px] left-[81px] flex h-[268px] w-[282px] flex-col border border-[#aabbd4] bg-[#b9cbe4] px-[2px] pb-[2px] text-[11px]">
        <div className="flex h-[22px] items-center justify-between bg-linear-to-b from-[#c0d0e8] to-[#adc1df] pt-[2px] pr-[5px] font-[Lato,sans-serif] text-[#68788f]">
            <h2>Feed FC</h2>
            <WindowButtons />
        </div>
        <div className="flex-1 border border-[#8da4c4] bg-linear-to-b from-[#f2f7fd] via-[#dfe9f6] to-[#d8e4f3] pl-[4px] pt-[7px] text-[#3b3b3b]">
            <div className="flex leading-[16px] text-[10px]">
                <span className="w-[34px]">Exec:</span>
                <span className="w-[29px]">Int</span>
                <span className="w-[28px]">SP:</span>
                <span>L</span>
            </div>
            <svg width="6" height="9" viewBox="0 0 6 9" className="mt-1 block"><path d="M.5 0h5L3 8z" fill="#e01010" /></svg>
            <div className="w-[134px] border-t border-[#c4cbd6] pr-[3px] text-right leading-[19px] font-semibold text-[#1010a0]">PV: 13.565 kg/h</div>
            <div className="flex h-5 w-[81px] items-center bg-[#00f7fb] leading-5 text-[10px] text-[#1d4d55]">
                <span className="h-full w-[63px] border-r border-[#a8ffff] pl-[3px]">OP: 60.01 %</span>
            </div>
            <div className="mt-[3px] flex gap-1">
                <span className="relative">
                    <select aria-label="Mode" className="block h-[22px] w-[71px] appearance-none rounded-xs border border-[#7c7c7c] bg-white pl-[3px] leading-[20px] font-bold text-[#10109a]">
                        <option>Auto</option>
                    </select>
                    <svg width="7" height="4" viewBox="0 0 7 4" className="pointer-events-none absolute top-[9px] right-[2px]"><path d="M0 0h7L3.500 4z" fill="#333" /></svg>
                </span>
                <button className="h-[22px] w-[59px] rounded-xs border border-[#7c7c7c] bg-linear-to-b from-[#f4f4f4] to-[#d2d2d2]">Tuning</button>
            </div>
        </div>
    </section>
);

/* ---------- page ---------- */

const CaseTabs = () => (
    <div className="flex h-[19px] shrink-0 items-end bg-[#cfdced] pl-[5px] font-[Lato,sans-serif] text-[11px] whitespace-nowrap">
        <a href="#" className="flex h-[18px] items-center gap-1 rounded-t-lg border border-b-0 border-[#a4b5cc] bg-[#bdd0ea] pr-1 pl-[10px] font-bold">
            Flowsheet Case (Main) - Solver Active
            <svg width="7" height="7" viewBox="0 0 7 7" stroke="#8296b3"><path d="M.5.5l6 6M6.500.5l-6 6" /></svg>
        </a>
        <a href="#" className="ml-[1px] flex h-[16px] items-center gap-[6px] rounded-t-sm border border-b-0 border-[#a4b5cc] bg-[#e2ecf8] pr-[6px] pl-[5px]">
            Strip Charts
            <svg width="7" height="7" viewBox="0 0 7 7" stroke="#a0a8b4"><path d="M.5.5l6 6M6.500.5l-6 6" /></svg>
        </a>
        <button aria-label="New tab" className="ml-[4px] flex h-[15px] w-[14px] items-center justify-center border border-[#b4c2d4] bg-[#e2ecf8]">
            <svg width="9" height="9" viewBox="0 0 9 9" stroke="#333"><path d="M0 4.500h9M4.500 0v9" /></svg>
        </button>
    </div>
);

const Messages = () => (
    <section className="flex h-[44px] shrink-0 flex-col overflow-hidden border-t border-[#8fa3bf]">
        <div className="h-[4px] shrink-0 border-b border-[#a4b5cc]" />
        <div className="flex h-[23px] shrink-0 items-center justify-end gap-[7px] border-b border-[#6f7a8a] bg-[#deebf8] pb-[6px] text-[#5a78ab]">
            <Caret />
            <svg width="8" height="11" viewBox="0 0 8 11" fill="none" stroke="currentColor"><path d="M2.500.5h3v5h-3zM.5 6h7M4 6v4" /></svg>
            <svg width="5" height="9" viewBox="0 0 5 9" fill="none" stroke="currentColor" strokeWidth="1.400"><path d="M1 1l7 7M8 1L1 8" /></svg>
        </div>
        <div className="flex flex-1 bg-[#c7d6ea]">
            <div className="mr-[4px] ml-[3px] w-[442px] shrink-0 border-r border-[#777] bg-white" />
            <div className="relative flex-1 overflow-hidden border-l border-[#777] bg-white pl-[7px] font-[DejaVu_Sans_Mono,monospace] text-[10px] leading-[10px] text-[#1a1a1a]">
                <p>Integration time 0: The change specified by Valve Stickiness Malfunction has been applied to<br />VLV-102</p>
                <span className="absolute top-[1px] right-0 flex h-5 w-[11px] items-start justify-center bg-[#ececec] pt-[5px] text-[#888]"><Caret className="rotate-180" /></span>
            </div>
        </div>
    </section>
);

const Workspace = () => (
    <div className="relative flex min-w-0 flex-1 flex-col bg-[#c7d6ea]">
        <AnalysisBar />
        <CaseTabs />
        <div className="flex min-h-0 flex-1 flex-col border-t border-l border-[#93a5be] pt-[4px] pl-[6px] pb-[7px]">
            <main className="relative flex min-h-0 flex-1 flex-col overflow-hidden border-[3px] border-r-0 border-[#0202a8] bg-white">
                <div className="flex min-h-0 flex-1">
                    <div className="flex-1">
                        <FlowsheetDiagram />
                    </div>
                    <div className="mr-[5px] flex w-[15px] shrink-0 flex-col justify-end bg-[#c1c1c1]">
                        <button aria-label="Scroll down" className="flex h-[15px] items-center justify-center bg-[#f1f1f1]">
                            <svg width="9" height="6" viewBox="0 0 9 6" fill="none" stroke="#444" strokeWidth="1.800"><path d="M1 1l3.500 3.500L8 1" /></svg>
                        </button>
                    </div>
                </div>
                <div className="mr-[5px] flex h-[15px] shrink-0 bg-[#f0f0f0]">
                    <div className="flex-1 bg-[#bfbfbf]" />
                    <div className="w-[15px] bg-[#d4d4d4]" />
                    <button aria-label="Scroll right" className="flex w-[15px] items-center justify-center">
                        <svg width="6" height="9" viewBox="0 0 6 9" fill="none" stroke="#444" strokeWidth="1.800"><path d="M1 1l3.500 3.500L1 8" /></svg>
                    </button>
                    <div className="w-[15px]" />
                </div>
                <div className="mt-[1px] h-[4px] shrink-0 border-t-2 border-[#777]" />
            </main>
        </div>
        <Messages />
        <div className="pointer-events-none absolute inset-x-0 top-[55px] bottom-0 overflow-hidden">
            <div className="pointer-events-auto contents"><StripChartWindow /></div>
        </div>
    </div>
);

export default function App() {
    return (
        <div className="flex h-screen min-h-[720px] flex-col overflow-hidden bg-black py-5 font-[Open_Sans,sans-serif] text-black">
            <div className="relative flex min-h-0 flex-1 flex-col overflow-hidden bg-white">
                <Ribbon />
                <div className="flex min-h-0 flex-1">
                    <Sidebar />
                    <Workspace />
                </div>
                <FacePlate />
            </div>
        </div>
    )
}
